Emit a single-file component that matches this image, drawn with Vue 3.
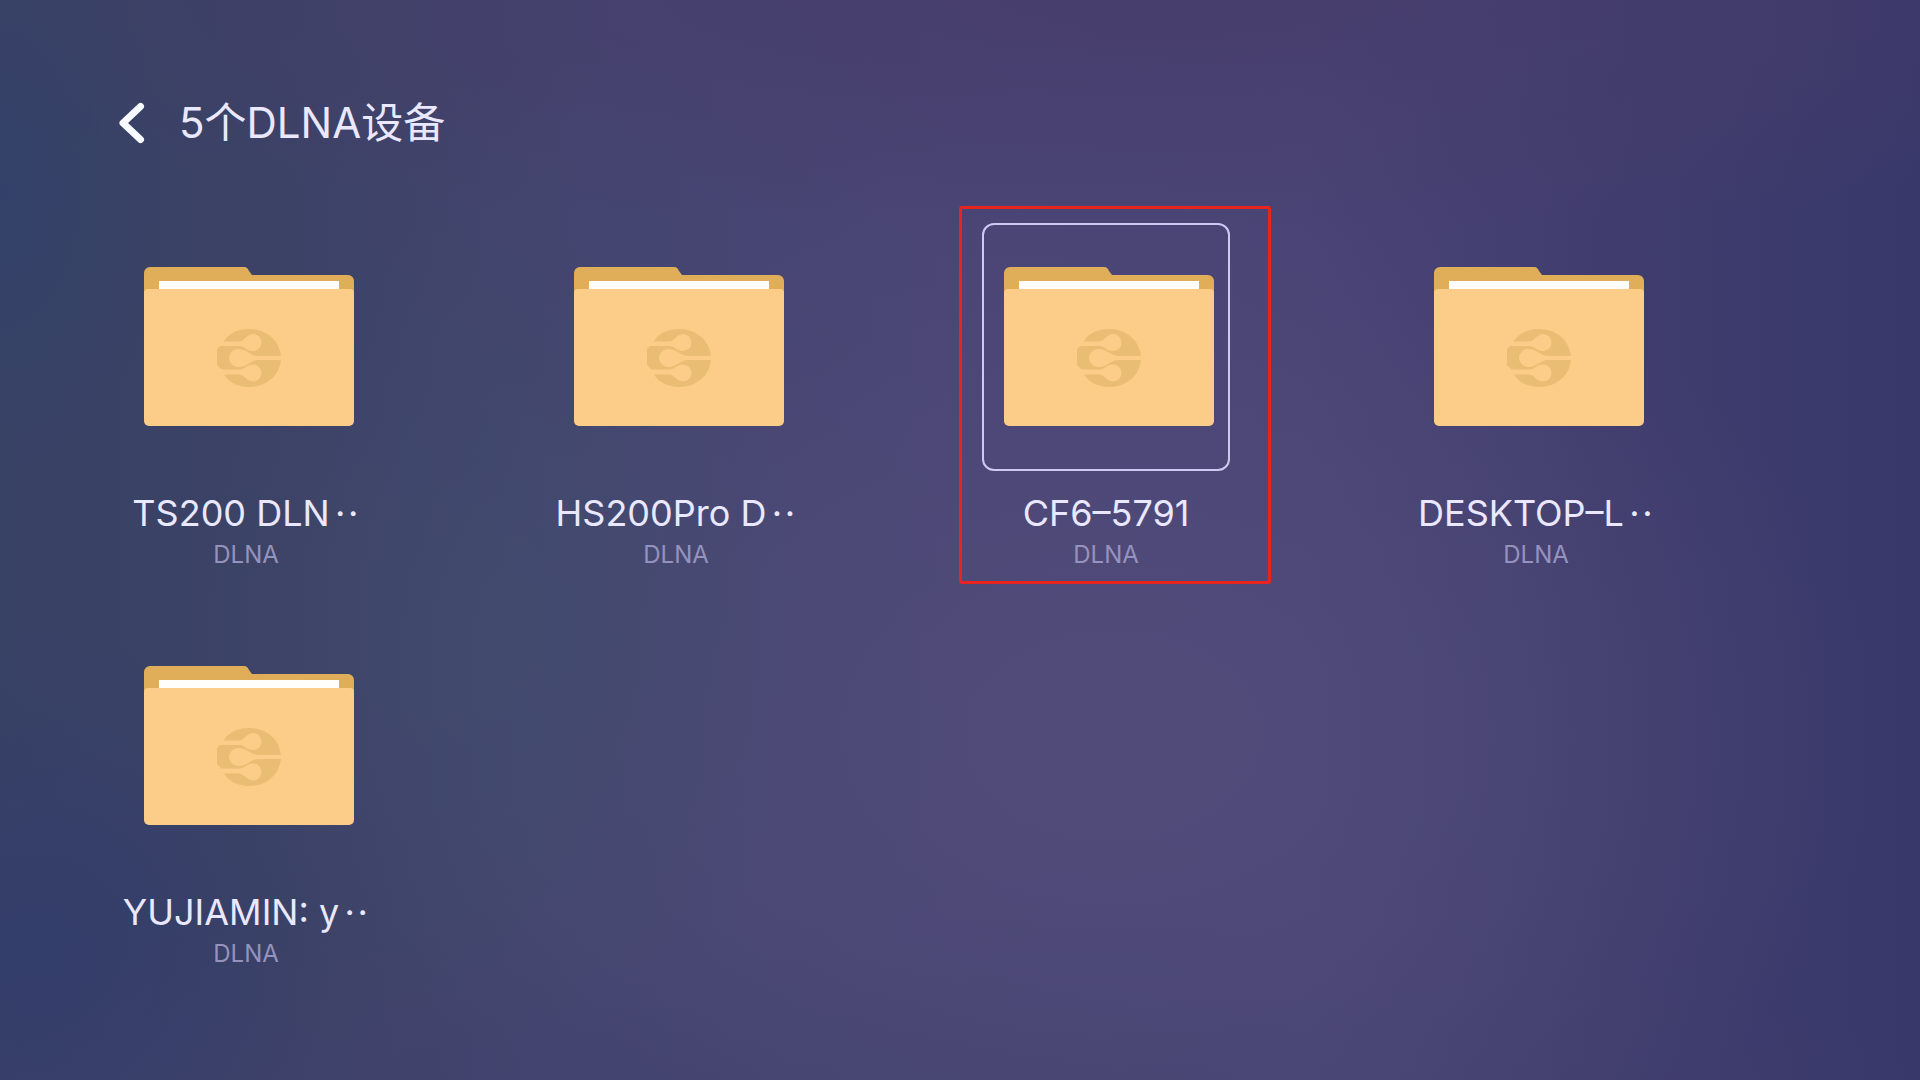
<script setup>
const devices = [
  { name: 'TS200 DLN', clipped: true, kind: 'DLNA' },
  { name: 'HS200Pro D', clipped: true, kind: 'DLNA' },
  { name: 'CF6–5791', clipped: false, kind: 'DLNA', selected: true },
  { name: 'DESKTOP–L', clipped: true, kind: 'DLNA' },
  { name: 'YUJIAMIN: y', clipped: true, kind: 'DLNA' },
]
</script>

<template>
  <div class="screen">
    <header class="bar">
      <button class="back" type="button" aria-label="返回">
        <svg viewBox="0 0 28 42" width="28" height="42" aria-hidden="true">
          <path d="M23.500 4.500 6 21l17.500 16.500" />
        </svg>
      </button>
      <h1 class="title">{{ devices.length }}个DLNA设备</h1>
    </header>

    <main class="grid">
      <button
        v-for="device in devices"
        :key="device.name"
        type="button"
        class="device"
        :class="{ selected: device.selected }"
      >
        <span class="frame">
          <svg class="folder" viewBox="0 0 210 160" width="210" height="160" aria-hidden="true">
            <path fill="#e0ad59" d="M0 30V6a6 6 0 0 1 6-6h94c3 0 4 2 5 4l3 4h96a6 6 0 0 1 6 6v16z" />
            <path fill="#fffefa" d="M15 14h180v10H15z" />
            <path fill="#fbcd88" d="M0 26q0-4 4-4h202q4 0 4 4v128a5 5 0 0 1-5 5H5a5 5 0 0 1-5-5z" />
            <path
              fill="#e9bd74"
              d="M80 74C85 66 94 62 105 62c18 0 31 12 32 28v2c-1 16-14 28-32 28-10 0-19-4-24-11l-4-7-4-4V82l4-4z"
            />
            <g fill="#fbcd88">
              <path d="M70 74.500h25c5 0 7-7 14-7.500a8.500 8.500 0 1 1 0 17c-7 0-8-5-14-5H70z" />
              <path d="M140 89h-26c-7 0-11-7-20-7a9 9 0 1 0 0 18c9 0 13-7 20-7h26z" />
              <path d="M70 102.500h25c6 0 7-5 14-5a8.500 8.500 0 1 1 0 17c-7-.5-9-7-14-7H70z" />
            </g>
          </svg>
        </span>
        <span class="name">{{ device.name }}<span v-if="device.clipped" class="more"><i>·</i><i>·</i></span></span>
        <span class="kind">{{ device.kind }}</span>
      </button>
    </main>
  </div>
</template>

<style>
body {
  margin: 0;
  background: #434170;
}
</style>

<style scoped>
.screen {
  box-sizing: border-box;
  min-height: 100vh;
  padding: 90px 78px 40px 117px;
  font-family: Inter, "Noto Sans CJK SC", sans-serif;
  color: #e9e8ff;
  background:
    radial-gradient(ellipse 16% 40% at 26% 58%, rgba(64, 76, 108, 0.7), transparent),
    radial-gradient(ellipse 9% 26% at 0% 18%, rgba(50, 64, 106, 0.8), transparent),
    radial-gradient(ellipse 16% 30% at 2% 88%, rgba(50, 60, 108, 0.8), transparent),
    radial-gradient(ellipse 40% 50% at 58% 68%, rgba(82, 78, 122, 0.8), transparent),
    radial-gradient(ellipse 70% 22% at 60% 0%, rgba(70, 60, 106, 0.8), transparent),
    radial-gradient(ellipse 60% 16% at 40% 100%, rgba(66, 66, 110, 0.7), transparent),
    linear-gradient(90deg, #384264 0%, #3c4266 15%, #444570 30%, #4a4575 50%, #4a4476 68%, #403d6e 84%, #38386a 100%);
}

.bar {
  display: flex;
  align-items: center;
  gap: 34px;
  height: 66px;
}

button {
  margin: 0;
  padding: 0;
  border: 0;
  background: none;
  font: inherit;
  color: inherit;
  cursor: pointer;
}

.back {
  display: flex;
}

.back path {
  fill: none;
  stroke: #f8fbff;
  stroke-width: 7;
  stroke-linecap: round;
  stroke-linejoin: round;
}

.title {
  margin: 0;
  font-size: 42px;
  font-weight: 400;
  line-height: 60px;
}

.grid {
  display: grid;
  grid-template-columns: repeat(4, 1fr);
  justify-items: start;
  row-gap: 52px;
  margin: 67px 0 0 5px;
}

.device {
  position: relative;
  display: flex;
  flex-direction: column;
  align-items: center;
  width: 248px;
}

.frame {
  box-sizing: border-box;
  width: 248px;
  height: 248px;
  padding: 42px 0 0 20px;
  border: 2px solid transparent;
  border-radius: 12px;
}

.folder {
  display: block;
}

.selected .frame {
  border-color: #cfc8f2;
}

.selected::after {
  content: "";
  position: absolute;
  inset: -17px -41px -14px -23px;
  border: 3px solid #e8241e;
  border-radius: 3px;
}

.name {
  display: flex;
  margin-top: 18px;
  font-size: 36px;
  line-height: 48px;
  white-space: nowrap;
}

.more {
  display: flex;
  margin-left: 4px;
}

.more i {
  width: 13px;
  font-style: normal;
  text-align: center;
}

.kind {
  margin-top: 3px;
  font-size: 24px;
  line-height: 30px;
  color: #9593bd;
}
</style>
